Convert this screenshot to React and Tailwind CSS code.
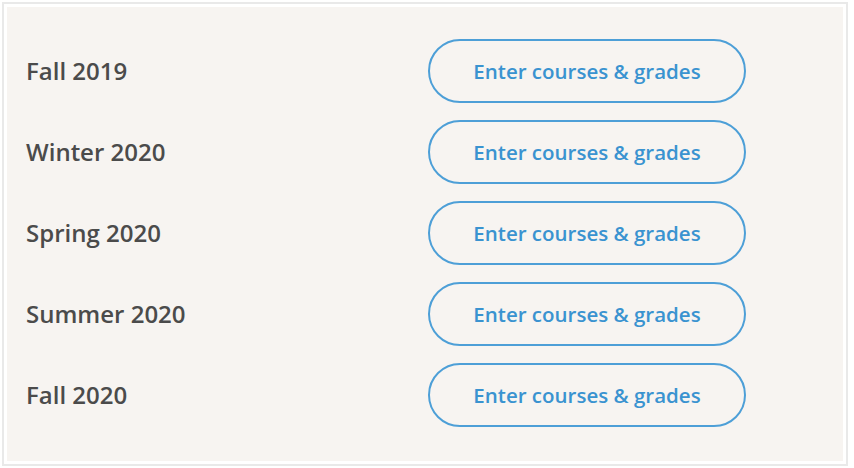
import React from 'react';

const terms = ['Fall 2019', 'Winter 2020', 'Spring 2020', 'Summer 2020', 'Fall 2020'];

export default function App() {
  return (
    <div className="w-[854px] h-[468px] bg-white p-[2px]">
      <div className="h-full w-[846px] border-2 border-[#e9e9e9] p-[3px]">
        <div className="h-full bg-[#f7f4f1] pt-[32px] pl-[19px] flex flex-col gap-[17px]">
          {terms.map((term) => (
            <div key={term} className="flex items-center">
              <div
                className="w-[402px] text-[24px] font-semibold text-[#4b4b4b]"
                style={{ fontFamily: '"Open Sans", sans-serif' }}
              >
                {term}
              </div>
              <button
                className="w-[318px] h-[64px] rounded-full border-2 border-[#4d9fd7] text-[20.5px] font-semibold text-[#3a93d0]"
                style={{ fontFamily: '"Open Sans", sans-serif' }}
              >
                Enter courses &amp; grades
              </button>
            </div>
          ))}
        </div>
      </div>
    </div>
  );
}
